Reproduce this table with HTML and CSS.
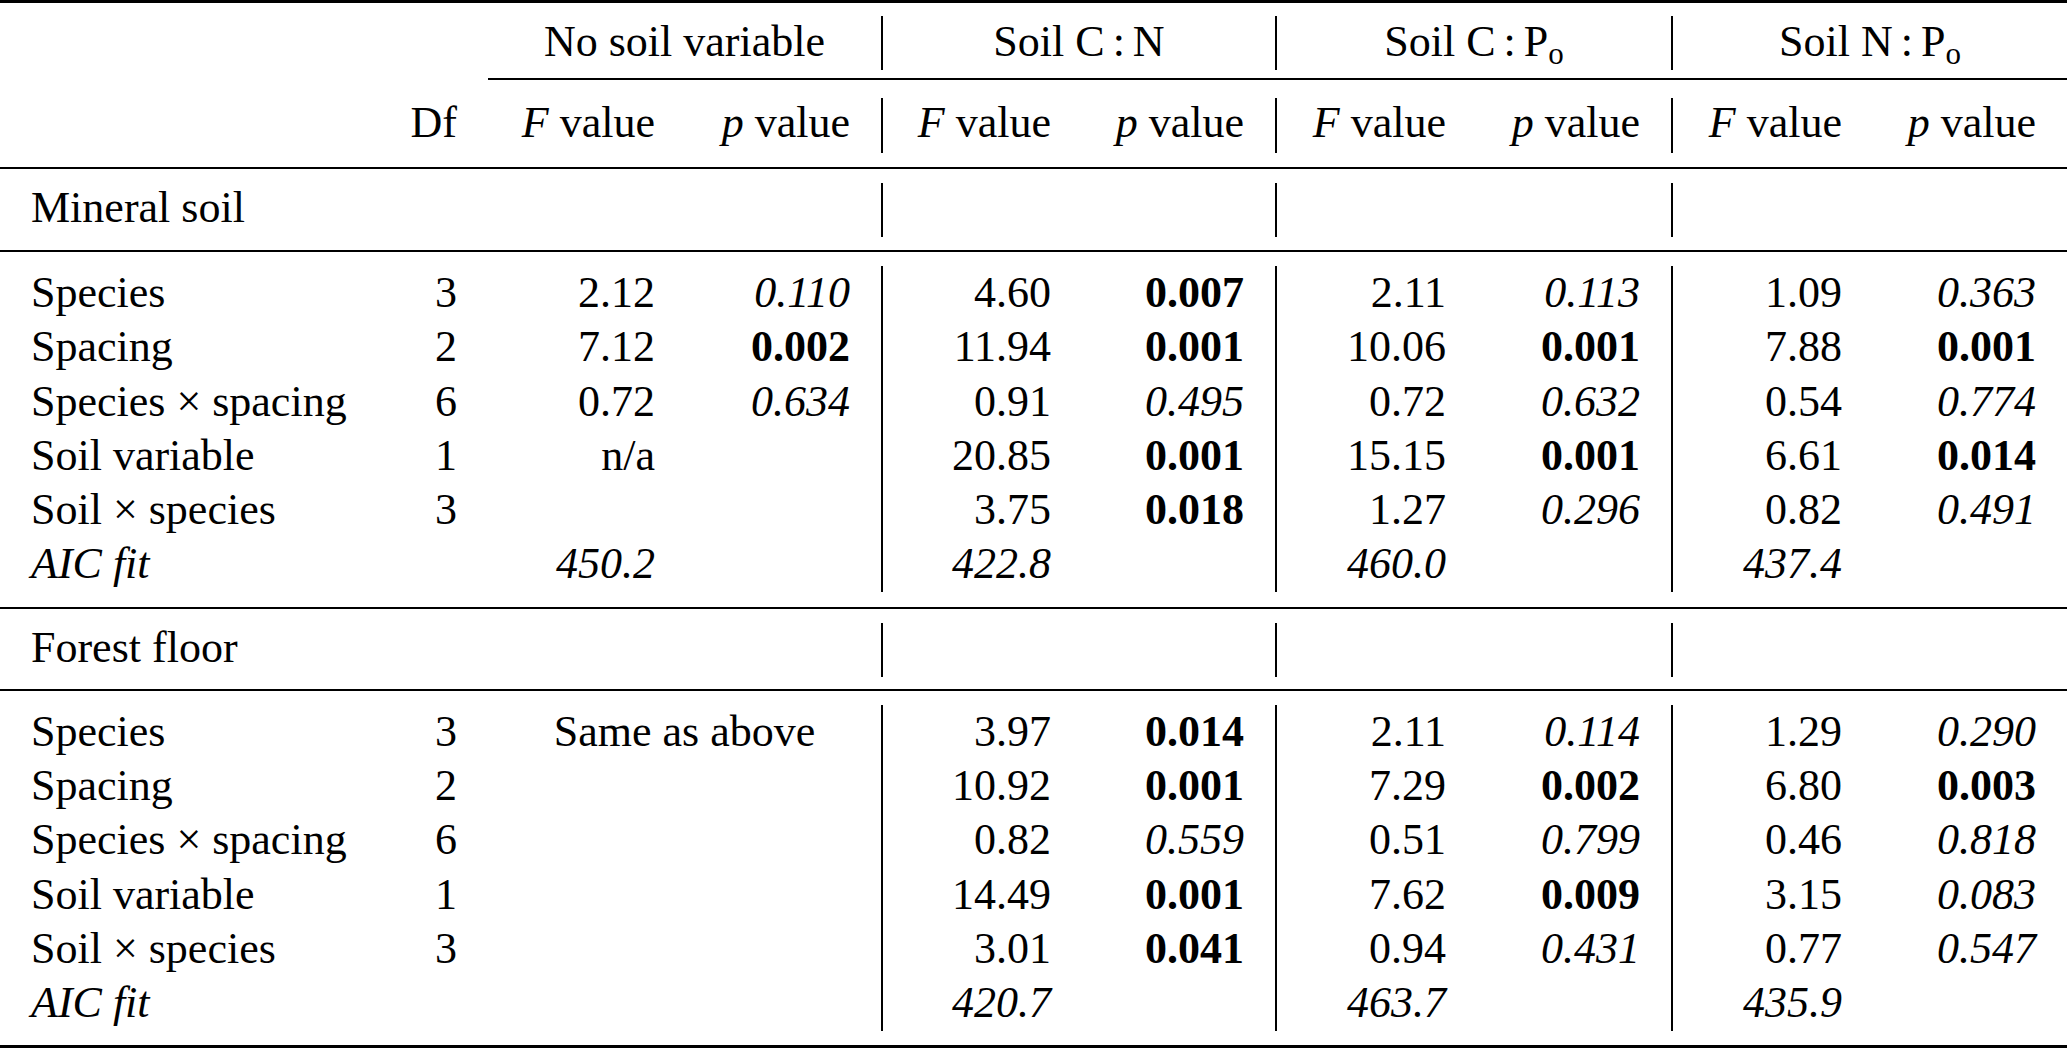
FILE: index.html
```html
<!DOCTYPE html>
<html lang="en">
<head>
<meta charset="utf-8">
<title>ANOVA table</title>
<link rel="stylesheet" href="styles.css">
</head>
<body>
<table class="anova">
  <colgroup>
    <col class="w-label"><col class="w-df">
    <col class="w-f1"><col class="w-p1">
    <col class="w-f2"><col class="w-p2">
    <col class="w-f3"><col class="w-p3">
    <col class="w-f4"><col class="w-p4">
  </colgroup>
  <tbody>
    <tr class="sep sep-top"><td colspan="10"><div class="hr thick"></div></td></tr>
    <tr class="head1">
      <td></td><td></td>
      <td colspan="2" class="grp">No soil variable</td>
      <td colspan="2" class="grp vb">Soil C<span class="colon">:</span>N</td>
      <td colspan="2" class="grp vb">Soil C<span class="colon">:</span>P<sub>o</sub></td>
      <td colspan="2" class="grp vb">Soil N<span class="colon">:</span>P<sub>o</sub></td>
    </tr>
    <tr class="sep sep-cmid"><td colspan="2"></td><td colspan="8"><div class="hr"></div></td></tr>
    <tr class="head2">
      <td></td><td class="num">Df</td>
      <td class="num"><i>F</i> value</td><td class="num"><i>p</i> value</td>
      <td class="num vb"><i>F</i> value</td><td class="num"><i>p</i> value</td>
      <td class="num vb"><i>F</i> value</td><td class="num"><i>p</i> value</td>
      <td class="num vb"><i>F</i> value</td><td class="num"><i>p</i> value</td>
    </tr>
    <tr class="sep sep-a"><td colspan="10"><div class="hr"></div></td></tr>
    <tr class="section">
      <td class="label">Mineral soil</td><td></td><td></td><td></td>
      <td class="vb"></td><td></td><td class="vb"></td><td></td><td class="vb"></td><td></td>
    </tr>
    <tr class="sep sep-b"><td colspan="10"><div class="hr"></div></td></tr>
    <tr class="data">
      <td class="label">Species</td><td class="num">3</td>
      <td class="num">2.12</td><td class="num it">0.110</td>
      <td class="num vb">4.60</td><td class="num b">0.007</td>
      <td class="num vb">2.11</td><td class="num it">0.113</td>
      <td class="num vb">1.09</td><td class="num it">0.363</td>
    </tr>
    <tr class="data">
      <td class="label">Spacing</td><td class="num">2</td>
      <td class="num">7.12</td><td class="num b">0.002</td>
      <td class="num vb">11.94</td><td class="num b">0.001</td>
      <td class="num vb">10.06</td><td class="num b">0.001</td>
      <td class="num vb">7.88</td><td class="num b">0.001</td>
    </tr>
    <tr class="data">
      <td class="label">Species × spacing</td><td class="num">6</td>
      <td class="num">0.72</td><td class="num it">0.634</td>
      <td class="num vb">0.91</td><td class="num it">0.495</td>
      <td class="num vb">0.72</td><td class="num it">0.632</td>
      <td class="num vb">0.54</td><td class="num it">0.774</td>
    </tr>
    <tr class="data">
      <td class="label">Soil variable</td><td class="num">1</td>
      <td class="num">n/a</td><td class="num"></td>
      <td class="num vb">20.85</td><td class="num b">0.001</td>
      <td class="num vb">15.15</td><td class="num b">0.001</td>
      <td class="num vb">6.61</td><td class="num b">0.014</td>
    </tr>
    <tr class="data">
      <td class="label">Soil × species</td><td class="num">3</td>
      <td class="num"></td><td class="num"></td>
      <td class="num vb">3.75</td><td class="num b">0.018</td>
      <td class="num vb">1.27</td><td class="num it">0.296</td>
      <td class="num vb">0.82</td><td class="num it">0.491</td>
    </tr>
    <tr class="data">
      <td class="label it">AIC fit</td><td class="num"></td>
      <td class="num it">450.2</td><td class="num"></td>
      <td class="num vb it">422.8</td><td class="num"></td>
      <td class="num vb it">460.0</td><td class="num"></td>
      <td class="num vb it">437.4</td><td class="num"></td>
    </tr>
    <tr class="sep sep-c"><td colspan="10"><div class="hr"></div></td></tr>
    <tr class="section">
      <td class="label">Forest floor</td><td></td><td></td><td></td>
      <td class="vb"></td><td></td><td class="vb"></td><td></td><td class="vb"></td><td></td>
    </tr>
    <tr class="sep sep-d"><td colspan="10"><div class="hr"></div></td></tr>
    <tr class="data">
      <td class="label">Species</td><td class="num">3</td>
      <td colspan="2" class="grp">Same as above</td>
      <td class="num vb">3.97</td><td class="num b">0.014</td>
      <td class="num vb">2.11</td><td class="num it">0.114</td>
      <td class="num vb">1.29</td><td class="num it">0.290</td>
    </tr>
    <tr class="data">
      <td class="label">Spacing</td><td class="num">2</td>
      <td class="num"></td><td class="num"></td>
      <td class="num vb">10.92</td><td class="num b">0.001</td>
      <td class="num vb">7.29</td><td class="num b">0.002</td>
      <td class="num vb">6.80</td><td class="num b">0.003</td>
    </tr>
    <tr class="data">
      <td class="label">Species × spacing</td><td class="num">6</td>
      <td class="num"></td><td class="num"></td>
      <td class="num vb">0.82</td><td class="num it">0.559</td>
      <td class="num vb">0.51</td><td class="num it">0.799</td>
      <td class="num vb">0.46</td><td class="num it">0.818</td>
    </tr>
    <tr class="data">
      <td class="label">Soil variable</td><td class="num">1</td>
      <td class="num"></td><td class="num"></td>
      <td class="num vb">14.49</td><td class="num b">0.001</td>
      <td class="num vb">7.62</td><td class="num b">0.009</td>
      <td class="num vb">3.15</td><td class="num it">0.083</td>
    </tr>
    <tr class="data">
      <td class="label">Soil × species</td><td class="num">3</td>
      <td class="num"></td><td class="num"></td>
      <td class="num vb">3.01</td><td class="num b">0.041</td>
      <td class="num vb">0.94</td><td class="num it">0.431</td>
      <td class="num vb">0.77</td><td class="num it">0.547</td>
    </tr>
    <tr class="data">
      <td class="label it">AIC fit</td><td class="num"></td>
      <td class="num"></td><td class="num"></td>
      <td class="num vb it">420.7</td><td class="num"></td>
      <td class="num vb it">463.7</td><td class="num"></td>
      <td class="num vb it">435.9</td><td class="num"></td>
    </tr>
    <tr class="sep sep-bottom"><td colspan="10"><div class="hr thick"></div></td></tr>
  </tbody>
</table>
</body>
</html>
```

FILE: styles.css
```css
html, body {
  margin: 0;
  padding: 0;
  background: #ffffff;
}

body {
  font-family: "Liberation Serif", "Times New Roman", Times, serif;
  color: #000000;
}

.anova {
  width: 2067px;
  table-layout: fixed;
  border-collapse: separate;
  border-spacing: 0;
  font-size: 44px;
  font-family: "Liberation Serif", "Times New Roman", Times, serif;
}

.w-label { width: 388px; }
.w-df { width: 100px; }
.w-f1 { width: 198px; }
.w-p1 { width: 195px; }
.w-f2 { width: 201px; }
.w-p2 { width: 193px; }
.w-f3 { width: 202px; }
.w-p3 { width: 194px; }
.w-f4 { width: 202px; }
.w-p4 { width: 194px; }

.anova td {
  padding: 0;
  box-sizing: border-box;
  white-space: nowrap;
  vertical-align: middle;
}

.head1 td { height: 54px; line-height: 51px; padding-bottom: 3px; }
.head2 td { height: 55px; line-height: 50px; padding-bottom: 5px; }
.section td { height: 54px; line-height: 49px; padding-bottom: 5px; }
.data td { height: 54.3px; line-height: 54.3px; }

.anova td.label {
  padding-left: 31px;
  text-align: left;
}

.anova td.num {
  padding-right: 31px;
  text-align: right;
}

.anova td.grp {
  text-align: center;
}

.anova td.vb {
  border-left: 2px solid #000000;
}

.it { font-style: italic; }
.b { font-weight: bold; }

.colon {
  margin: 0 8px;
}

sub {
  font-size: 31px;
  line-height: 0;
  vertical-align: -8px;
}

/* separator rows: gap + rule + gap */
.sep td { line-height: 0; font-size: 0; height: auto; }
.hr {
  height: 0;
  border-top: 2px solid #000000;
}
.hr.thick { border-top-width: 3px; }

.sep-top td { padding: 0 0 13px 0; }
.sep-cmid td { padding: 8px 0 18px 0; }
.sep-a td { padding: 14px 0 14px 0; }
.sep-b td { padding: 13px 0 14px 0; }
.sep-c td { padding: 15px 0 14px 0; }
.sep-d td { padding: 12px 0 14px 0; }
.sep-bottom td { padding: 14px 0 0 0; }
```
